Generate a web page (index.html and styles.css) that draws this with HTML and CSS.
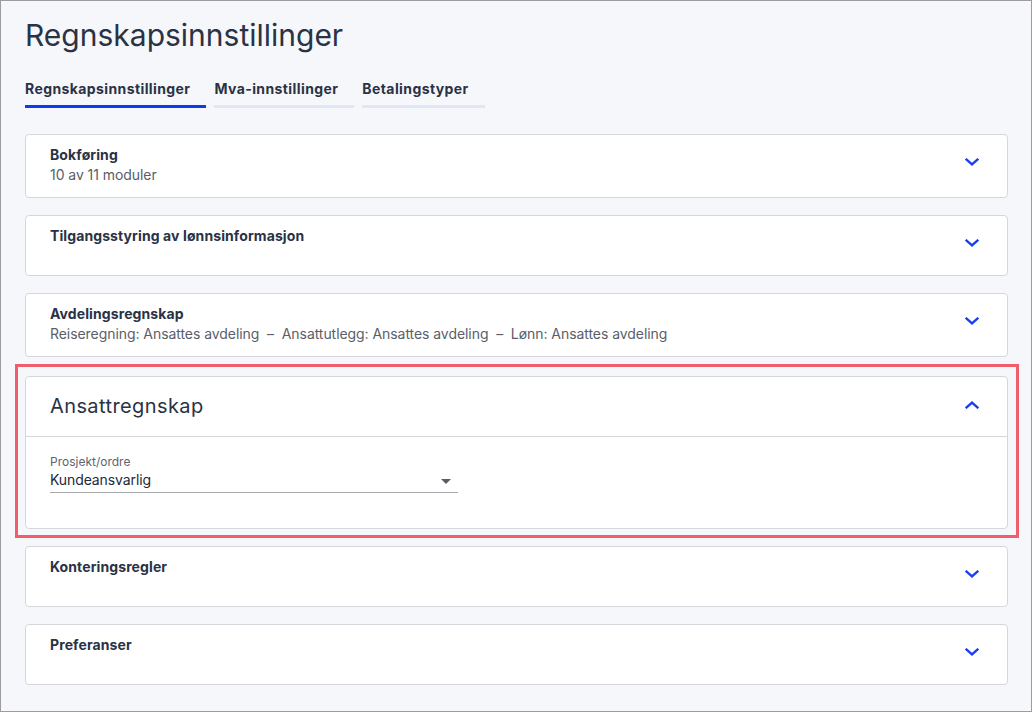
FILE: index.html
```html
<!DOCTYPE html>
<html lang="no">
<head>
<meta charset="utf-8">
<title>Regnskapsinnstillinger</title>
<link rel="stylesheet" href="styles.css">
</head>
<body>
<h1 class="page-title">Regnskapsinnstillinger</h1>
<nav class="tabs">
  <a class="tab tab-active">Regnskapsinnstillinger</a>
  <a class="tab">Mva-innstillinger</a>
  <a class="tab">Betalingstyper</a>
</nav>
<main class="cards">
  <section class="card">
    <div class="card-head">
      <div class="card-text">
        <div class="card-title">Bokføring</div>
        <div class="card-sub">10 av 11 moduler</div>
      </div>
      <svg class="chev" width="14" height="8" viewBox="0 0 14 8"><path d="M1.6 1.6 L7 6.3 L12.4 1.6" fill="none" stroke="#1a3ff2" stroke-width="2.4" stroke-linecap="square"/></svg>
    </div>
  </section>
  <section class="card">
    <div class="card-head">
      <div class="card-text">
        <div class="card-title">Tilgangsstyring av lønnsinformasjon</div>
      </div>
      <svg class="chev" width="14" height="8" viewBox="0 0 14 8"><path d="M1.6 1.6 L7 6.3 L12.4 1.6" fill="none" stroke="#1a3ff2" stroke-width="2.4" stroke-linecap="square"/></svg>
    </div>
  </section>
  <section class="card">
    <div class="card-head">
      <div class="card-text">
        <div class="card-title">Avdelingsregnskap</div>
        <div class="card-sub">Reiseregning: Ansattes avdeling &nbsp;–&nbsp; Ansattutlegg: Ansattes avdeling &nbsp;–&nbsp; Lønn: Ansattes avdeling</div>
      </div>
      <svg class="chev" width="14" height="8" viewBox="0 0 14 8"><path d="M1.6 1.6 L7 6.3 L12.4 1.6" fill="none" stroke="#1a3ff2" stroke-width="2.4" stroke-linecap="square"/></svg>
    </div>
  </section>
  <section class="card card-open card-highlight">
    <div class="open-head">
      <div class="open-title">Ansattregnskap</div>
      <svg class="chev-up" width="14" height="8" viewBox="0 0 14 8"><path d="M1.6 6.4 L7 1.7 L12.4 6.4" fill="none" stroke="#1a3ff2" stroke-width="2.4" stroke-linecap="square"/></svg>
    </div>
    <div class="open-body">
      <div class="field">
        <div class="field-label">Prosjekt/ordre</div>
        <div class="select">
          <span class="select-value">Kundeansvarlig</span>
          <span class="select-arrow"></span>
        </div>
      </div>
    </div>
  </section>
  <section class="card">
    <div class="card-head">
      <div class="card-text">
        <div class="card-title">Konteringsregler</div>
      </div>
      <svg class="chev" width="14" height="8" viewBox="0 0 14 8"><path d="M1.6 1.6 L7 6.3 L12.4 1.6" fill="none" stroke="#1a3ff2" stroke-width="2.4" stroke-linecap="square"/></svg>
    </div>
  </section>
  <section class="card">
    <div class="card-head">
      <div class="card-text">
        <div class="card-title">Preferanser</div>
      </div>
      <svg class="chev" width="14" height="8" viewBox="0 0 14 8"><path d="M1.6 1.6 L7 6.3 L12.4 1.6" fill="none" stroke="#1a3ff2" stroke-width="2.4" stroke-linecap="square"/></svg>
    </div>
  </section>
</main>
</body>
</html>
```
FILE: styles.css
```css
* { box-sizing: border-box; }

html, body { height: 100%; }

body {
  margin: 0;
  height: 712px;
  overflow: hidden;
  border: 1px solid #9c9c9c;
  background: #f6f7fb;
  padding: 16px 23px 0 24px;
  font-family: Inter, "Noto Sans", sans-serif;
  color: #2a3245;
}

.page-title {
  margin: 0;
  font-size: 30px;
  font-weight: 400;
  line-height: 36px;
  color: #2a3245;
}

.tabs {
  display: flex;
  gap: 8px;
  margin-top: 26px;
}

.tab {
  display: block;
  font-size: 14px;
  line-height: 20px;
  font-weight: 700;
  color: #2a3245;
  padding: 0 16px 6px 0;
  border-bottom: 3px solid #e2e5f5;
  letter-spacing: 0.4px;
}

.tab-active { border-bottom-color: #0b3cf2; }

.cards {
  margin-top: 26px;
  display: flex;
  flex-direction: column;
  gap: 17px;
}

.card {
  position: relative;
  background: #fff;
  border: 1px solid #d5d7dc;
  border-radius: 4px;
}

.card-head {
  display: flex;
  align-items: flex-start;
  padding: 10px 28px 12px 24px;
}

.card-text {
  flex: 1;
  min-height: 37px;
}

.card-title {
  font-size: 14px;
  line-height: 20px;
  font-weight: 700;
  color: #2a3245;
  letter-spacing: 0.1px;
}

.card-sub {
  font-size: 14px;
  line-height: 20px;
  color: #5a5e69;
  letter-spacing: -0.06px;
}

.chev { margin-top: 13px; display: block; }

.card-highlight { margin-top: 2px; }

.card-highlight::after {
  content: "";
  position: absolute;
  top: -13px;
  left: -11px;
  right: -12px;
  bottom: -10px;
  border: 3px solid #ef5e6a;
  pointer-events: none;
}

.open-head {
  display: flex;
  align-items: center;
  padding: 15px 28px 16px 24px;
  border-bottom: 1px solid #d5d7dc;
}

.open-title {
  flex: 1;
  font-size: 20px;
  line-height: 28px;
  font-weight: 400;
  color: #2a3245;
  letter-spacing: 0.4px;
}

.chev-up { display: block; margin-top: -2px; }

.open-body {
  padding: 17px 24px 35px 24px;
}

.field { width: 408px; }

.field-label {
  font-size: 12px;
  line-height: 16px;
  color: #5f636d;
}

.select {
  display: flex;
  align-items: center;
  padding: 0 7px 2px 0;
  border-bottom: 1px solid #a9abb0;
}

.select-value {
  flex: 1;
  font-size: 14px;
  line-height: 20px;
  color: #22293a;
  letter-spacing: -0.1px;
}

.select-arrow {
  width: 0;
  height: 0;
  border-left: 5px solid transparent;
  border-right: 5px solid transparent;
  border-top: 5px solid #5b5d62;
  margin-top: 2px;
}
```
